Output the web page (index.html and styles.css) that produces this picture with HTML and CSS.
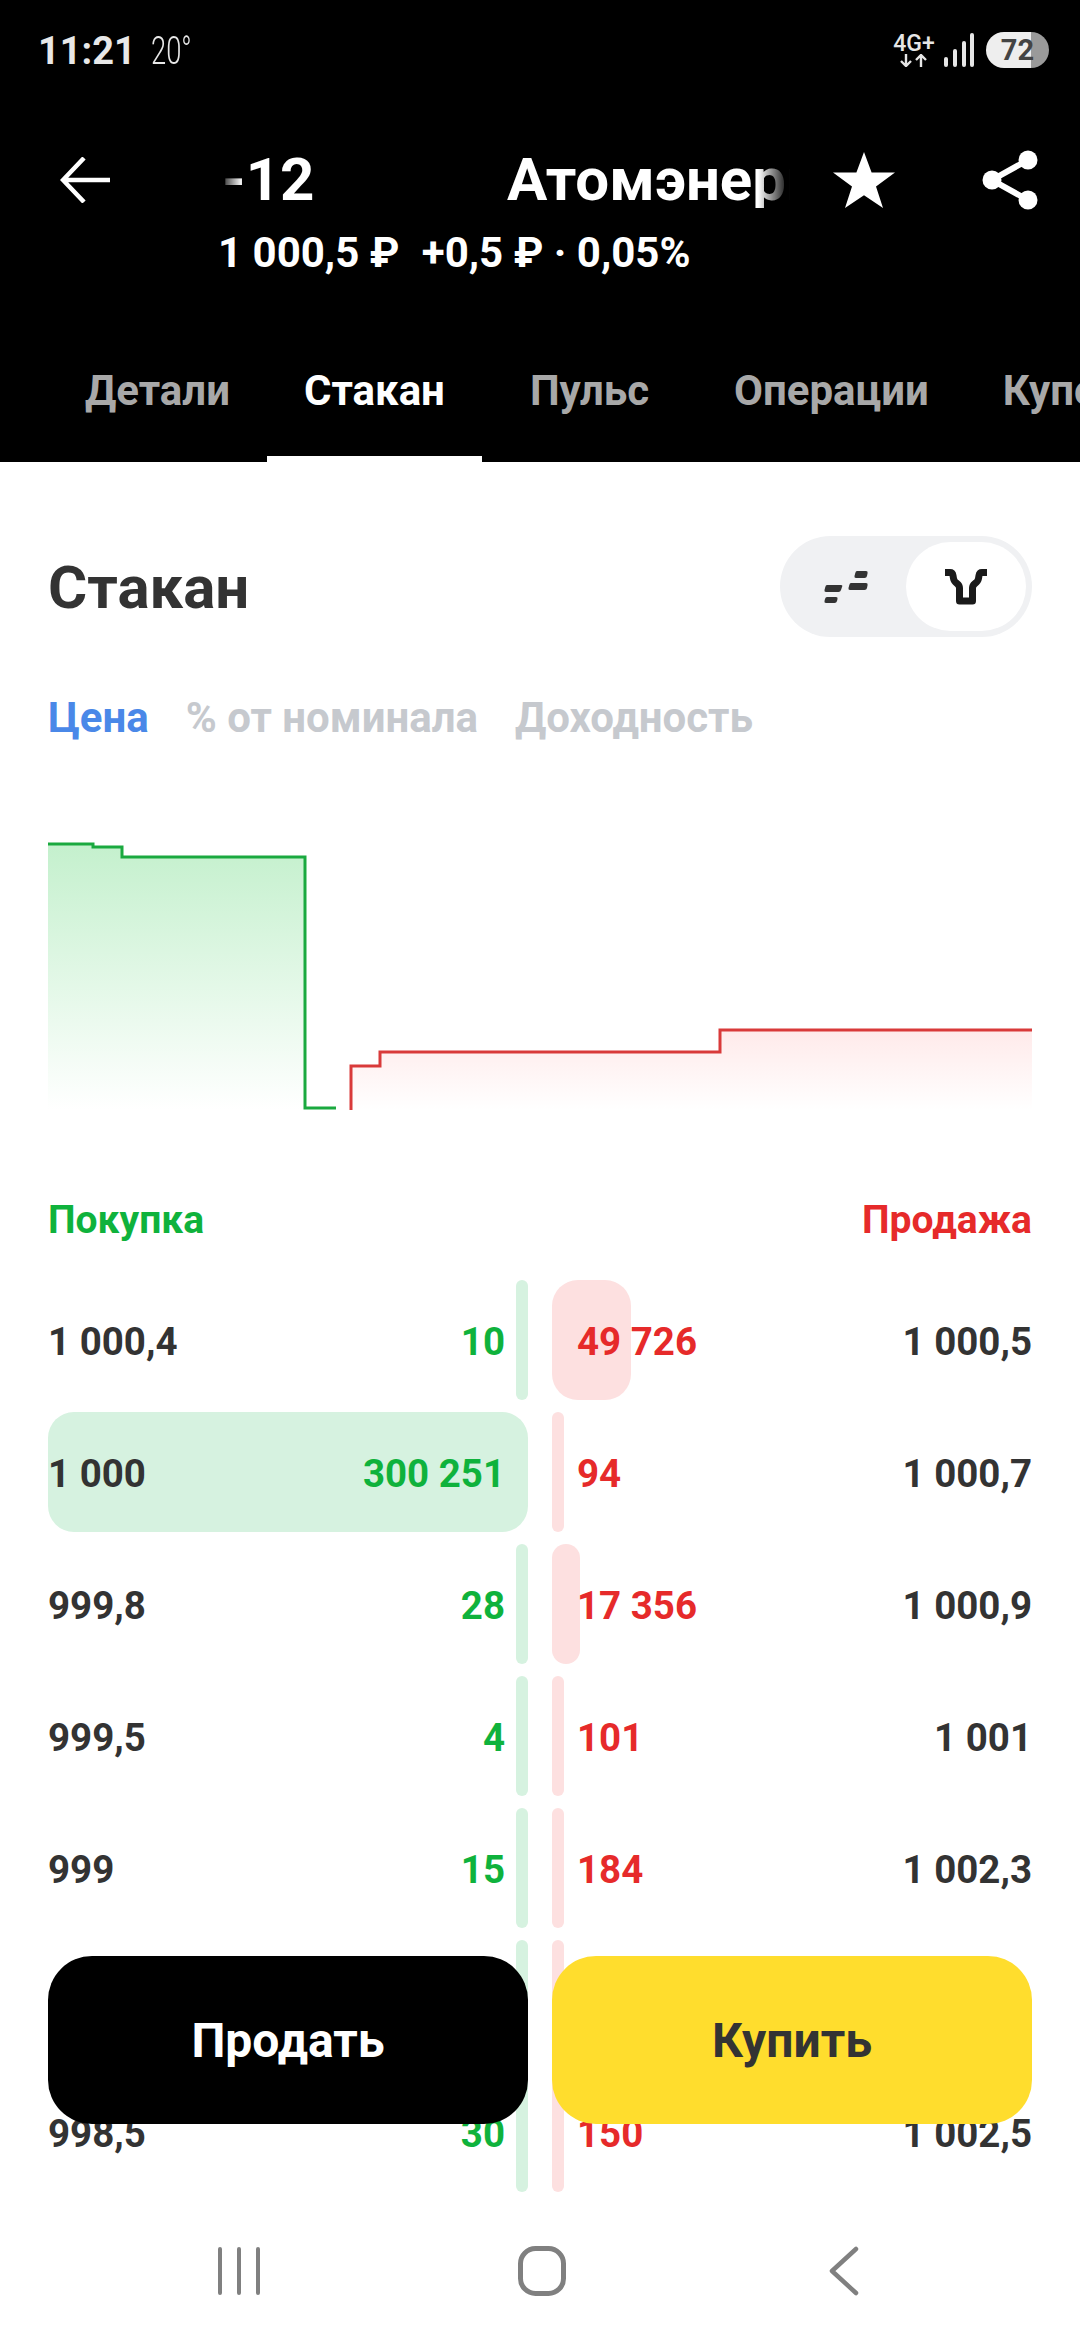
FILE: index.html
```html
<!DOCTYPE html>
<html lang="ru">
<head>
  <meta charset="UTF-8" />
  <meta name="viewport" content="width=device-width, initial-scale=1.0"/>
  <title>Стакан</title>
  <link rel="stylesheet" href="styles.css">
</head>
<body>
<div class="screen">

  <header class="header">
    <div class="status-bar">
      <div class="status-time"><b>11:21</b> <span>20°</span></div>
      <div class="status-icons">
        <div class="net">
          <span class="net-label">4G+</span>
          <svg width="30" height="13" viewBox="0 0 30 13" fill="none" stroke="#e6e6e6" stroke-width="2.4">
            <path d="M7 0v12M2 7l5 5 5-5M22 13V1M17 6l5-5 5 5"/>
          </svg>
        </div>
        <svg class="signal" width="30" height="34" viewBox="0 0 30 34" fill="#e6e6e6">
          <rect x="0" y="24" width="4" height="10" rx="2"/>
          <rect x="9" y="16" width="4" height="18" rx="2"/>
          <rect x="18" y="8" width="4" height="26" rx="2"/>
          <rect x="26" y="0" width="4" height="34" rx="2"/>
        </svg>
        <div class="battery">72</div>
      </div>
    </div>

    <div class="title-bar">
      <svg class="back" width="50" height="46" viewBox="0 0 50 46" fill="none" stroke="#fff" stroke-width="4.5">
        <path d="M50 23H3M24 1L3 23l21 22"/>
      </svg>
      <div class="title-block">
        <div class="marquee"><span class="marquee-a">-12</span><span>Атомэнерго</span></div>
        <div class="quote">1 000,5 ₽ <span class="quote-change">+0,5 ₽ · 0,05%</span></div>
      </div>
      <svg class="star" width="62" height="56" viewBox="0 0 62 56" fill="#fff">
        <path d="M31 0l7.6 20.6H62L43 34.6 50 56 31 43.2 12 56l7-21.4L0 20.6h23.4z"/>
      </svg>
      <svg class="share" width="56" height="60" viewBox="0 0 56 60">
        <path d="M46 10L10 30l36 20" fill="none" stroke="#fff" stroke-width="6"/>
        <circle cx="46" cy="10" r="9.5" fill="#fff"/>
        <circle cx="10" cy="30" r="9.5" fill="#fff"/>
        <circle cx="46" cy="50" r="9.5" fill="#fff"/>
      </svg>
    </div>

    <nav class="tabs">
      <div class="tab">Детали</div>
      <div class="tab active">Стакан</div>
      <div class="tab tab-wide">Пульс</div>
      <div class="tab">Операции</div>
      <div class="tab">Купоны</div>
    </nav>
  </header>

  <main class="content">
    <div class="heading-row">
      <h1 class="heading">Стакан</h1>
      <div class="toggle">
        <div class="toggle-item">
          <svg width="44" height="32" viewBox="0 0 44 32" fill="#333">
            <path d="M3 14h14q2 0 1 2l-1 3q-.6 2-2.500 2H2q-2 0-1.500-2l.8-3q.4-2 1.700-2z"/>
            <path d="M3 26h9q2 0 1.500 2l-.5 2q-.5 2-2.500 2H2q-2 0-1.500-2l.5-2q.5-2 2-2z"/>
            <path d="M27 12h15q2 0 1.600 2l-.6 3q-.4 2-2.500 2H26q-2 0-1.500-2l.8-3q.4-2 1.700-2z"/>
            <path d="M33 0h9q2 0 1.600 2l-.6 3q-.4 2-2.500 2H32q-2 0-1.500-2l.8-3Q31.700 0 33 0z"/>
          </svg>
        </div>
        <div class="toggle-item selected">
          <svg width="42" height="36" viewBox="0 0 42 36" fill="none" stroke="#1a1a1a" stroke-width="7" stroke-linejoin="round">
            <path d="M0 3.500h5q2.500 0 3 3l.5 3q.5 3 3.500 5q2.500 2 2.500 4.500V32h13V19q0-2.500 2.500-4.500q3-2 3.500-5l.5-3q.5-3 3-3h5"/>
          </svg>
        </div>
      </div>
    </div>

    <div class="price-modes">
      <span class="mode current">Цена</span>
      <span class="mode">% от номинала</span>
      <span class="mode">Доходность</span>
    </div>

    <svg class="chart" width="984" height="290" viewBox="0 0 984 290" fill="none">
      <defs>
        <linearGradient id="bid-fill" x1="0" y1="0" x2="0" y2="1">
          <stop offset="0" stop-color="#c4f0cd"/>
          <stop offset="1" stop-color="#ffffff"/>
        </linearGradient>
        <linearGradient id="ask-fill" x1="0" y1="0" x2="0" y2="1">
          <stop offset="0" stop-color="#ffeaea"/>
          <stop offset="1" stop-color="#ffffff"/>
        </linearGradient>
      </defs>
      <path d="M0 14H45V17H74V27H257V280H0Z" fill="url(#bid-fill)"/>
      <path d="M303 280V236H332V222H672V200H984V280Z" fill="url(#ask-fill)"/>
      <path d="M0 14H45V17H74V27H257V278H288" stroke="#1aa93f" stroke-width="3"/>
      <path d="M303 280V236H332V222H672V200H984" stroke="#d93a3a" stroke-width="3"/>
    </svg>

    <div class="sides">
      <span class="side-buy">Покупка</span>
      <span class="side-sell">Продажа</span>
    </div>

    <div class="book">
      <div class="book-row">
        <div class="bid"><i class="bar" style="width:12px"></i><span class="price">1 000,4</span><span class="qty">10</span></div>
        <div class="ask"><i class="bar" style="width:79px"></i><span class="qty">49 726</span><span class="price">1 000,5</span></div>
      </div>
      <div class="book-row">
        <div class="bid"><i class="bar" style="width:480px"></i><span class="price">1 000</span><span class="qty">300 251</span></div>
        <div class="ask"><i class="bar" style="width:12px"></i><span class="qty">94</span><span class="price">1 000,7</span></div>
      </div>
      <div class="book-row">
        <div class="bid"><i class="bar" style="width:12px"></i><span class="price">999,8</span><span class="qty">28</span></div>
        <div class="ask"><i class="bar" style="width:28px"></i><span class="qty">17 356</span><span class="price">1 000,9</span></div>
      </div>
      <div class="book-row">
        <div class="bid"><i class="bar" style="width:12px"></i><span class="price">999,5</span><span class="qty">4</span></div>
        <div class="ask"><i class="bar" style="width:12px"></i><span class="qty">101</span><span class="price">1 001</span></div>
      </div>
      <div class="book-row">
        <div class="bid"><i class="bar" style="width:12px"></i><span class="price">999</span><span class="qty">15</span></div>
        <div class="ask"><i class="bar" style="width:12px"></i><span class="qty">184</span><span class="price">1 002,3</span></div>
      </div>
      <div class="book-row">
        <div class="bid"><i class="bar" style="width:12px"></i></div>
        <div class="ask"><i class="bar" style="width:12px"></i></div>
      </div>
      <div class="book-row">
        <div class="bid"><i class="bar" style="width:12px"></i><span class="price">998,5</span><span class="qty">30</span></div>
        <div class="ask"><i class="bar" style="width:12px"></i><span class="qty">150</span><span class="price">1 002,5</span></div>
      </div>
    </div>

    <div class="actions">
      <button class="btn btn-sell">Продать</button>
      <button class="btn btn-buy">Купить</button>
    </div>
  </main>

  <footer class="nav-bar">
    <svg width="42" height="48" viewBox="0 0 42 48" fill="none" stroke="#808080" stroke-width="4" stroke-linecap="round">
      <path d="M2 2v44M21 2v44M40 2v44"/>
    </svg>
    <svg class="nav-home" width="48" height="50" viewBox="0 0 48 50" fill="none" stroke="#808080" stroke-width="5">
      <rect x="2.500" y="2.500" width="43" height="45" rx="15"/>
    </svg>
    <svg class="nav-back" width="30" height="50" viewBox="0 0 30 50" fill="none" stroke="#808080" stroke-width="4.500" stroke-linecap="round" stroke-linejoin="round">
      <path d="M27 3L3 25l24 22"/>
    </svg>
  </footer>
</div>
</body>
</html>
```

FILE: styles.css
```css
* { box-sizing: border-box; }

body {
  margin: 0;
  background: #fff;
  font-family: Roboto, "Liberation Sans", sans-serif;
}

.screen {
  width: 1080px;
  height: 2340px;
  overflow: hidden;
  display: flex;
  flex-direction: column;
}

/* header */
.header {
  height: 462px;
  background: #000;
  color: #fff;
  flex-shrink: 0;
}

.status-bar {
  height: 102px;
  padding: 30px 31px 0 38px;
  display: flex;
  justify-content: space-between;
  align-items: flex-start;
}

.status-time {
  font-size: 38px;
  line-height: 42px;
  color: #e8e8e8;
}
.status-time b { font-weight: 700; }
.status-time span {
  display: inline-block;
  font-weight: 300;
  margin-left: 6px;
  transform: scaleX(.72);
  transform-origin: left center;
}

.status-icons {
  display: flex;
  align-items: center;
  gap: 8px;
  margin-top: 2px;
}

.net {
  display: flex;
  flex-direction: column;
  align-items: center;
  width: 44px;
}
.net-label {
  font-size: 23px;
  line-height: 21px;
  font-weight: 500;
  color: #e6e6e6;
}

.battery {
  width: 63px;
  height: 36px;
  margin-left: 4px;
  border-radius: 18px;
  background: linear-gradient(90deg, #eeeeee 45px, #9a9a9a 45px);
  color: #444;
  font-size: 29px;
  font-weight: 700;
  line-height: 36px;
  text-align: center;
}

.title-bar {
  display: flex;
  align-items: flex-start;
  padding: 50px 45px 0 60px;
  height: 184px;
}

.back { margin-top: 5px; flex-shrink: 0; }

.title-block {
  width: 572px;
  margin-left: 108px;
  flex-shrink: 0;
}

.marquee {
  display: flex;
  overflow: hidden;
  white-space: nowrap;
  font-size: 60px;
  font-weight: 700;
  line-height: 56px;
  -webkit-mask-image: linear-gradient(90deg, transparent 0, #000 24px, #000 540px, transparent 572px);
  mask-image: linear-gradient(90deg, transparent 0, #000 24px, #000 540px, transparent 572px);
}
.marquee-a { width: 289px; flex-shrink: 0; padding-left: 4px; }

.quote {
  margin-top: 20px;
  font-size: 42px;
  font-weight: 700;
  line-height: 50px;
  white-space: nowrap;
}
.quote-change { margin-left: 12px; }

.star { margin-left: 43px; margin-top: 0; flex-shrink: 0; }
.share { margin-left: 87px; margin-top: -2px; flex-shrink: 0; }

.tabs {
  display: flex;
  height: 176px;
  padding-left: 48px;
  white-space: nowrap;
  overflow: hidden;
}

.tab {
  padding: 81px 37px 0;
  height: 176px;
  font-size: 42px;
  font-weight: 700;
  line-height: 48px;
  color: #a8a8a8;
  flex-shrink: 0;
}
.tab.active {
  color: #fff;
  border-bottom: 6px solid #fff;
}
.tab-wide { padding-left: 48px; padding-right: 48px; }

/* content */
.content {
  position: relative;
  flex: 1;
  padding: 74px 48px 0;
}

.heading-row {
  display: flex;
  justify-content: space-between;
  align-items: center;
  height: 101px;
}

.heading {
  margin: 2px 0 0;
  font-size: 60px;
  font-weight: 700;
  color: #333;
}

.toggle {
  width: 252px;
  height: 101px;
  padding: 6px;
  background: #f0f1f3;
  border-radius: 51px;
  display: flex;
}
.toggle-item {
  width: 120px;
  border-radius: 45px;
  display: flex;
  align-items: center;
  justify-content: center;
}
.toggle-item.selected { background: #fff; }

.price-modes {
  display: flex;
  gap: 37px;
  margin-top: 58px;
  height: 46px;
  font-size: 42px;
  line-height: 46px;
  font-weight: 700;
  color: #c6c9ce;
}
.mode.current { color: #4a88e8; }

.chart {
  display: block;
  margin-top: 89px;
}

.sides {
  display: flex;
  justify-content: space-between;
  margin-top: 78px;
  font-size: 39px;
  line-height: 44px;
  font-weight: 700;
}
.side-buy { color: #0fb23c; }
.side-sell { color: #e62a2a; }

/* order book */
.book {
  display: flex;
  flex-direction: column;
  gap: 12px;
  margin-top: 38px;
}

.book-row {
  display: grid;
  grid-template-columns: 480px 480px;
  gap: 24px;
  height: 120px;
}

.bid, .ask {
  position: relative;
  display: flex;
  justify-content: space-between;
  align-items: center;
  padding-top: 3px;
  font-size: 38.500px;
  font-weight: 700;
  color: #333;
}
.bid { padding-right: 23px; }
.ask { padding-left: 25px; }

.bid span, .ask span { position: relative; }

.bar {
  position: absolute;
  top: 0;
  bottom: 0;
  border-radius: 6px;
}
.bid .bar { right: 0; background: #d6f2e0; }
.ask .bar { left: 0; background: #fde0e0; }
.book-row:nth-child(1) .ask .bar,
.book-row:nth-child(2) .bid .bar { border-radius: 26px; }
.book-row:nth-child(3) .ask .bar { border-radius: 14px; }

.bid .qty { color: #0fb23c; }
.ask .qty { color: #e62a2a; }

.actions {
  position: absolute;
  left: 48px;
  top: 1494px;
  display: flex;
  gap: 24px;
}

.btn {
  width: 480px;
  height: 168px;
  border: none;
  border-radius: 44px;
  font-family: inherit;
  font-size: 48px;
  font-weight: 700;
}
.btn-sell { background: #000; color: #fff; }
.btn-buy { background: #ffdd2d; color: #333; }

/* system nav */
.nav-bar {
  height: 148px;
  flex-shrink: 0;
  background: #fff;
  display: flex;
  align-items: center;
  padding: 10px 0 0 218px;
}
.nav-home { margin-left: 258px; }
.nav-back { margin-left: 263px; }
```
